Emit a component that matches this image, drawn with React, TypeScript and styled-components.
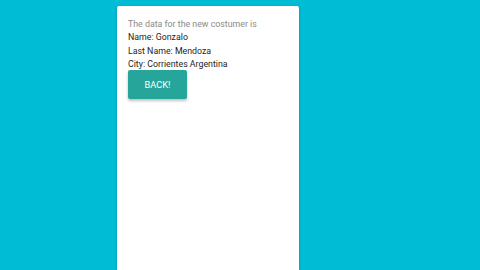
import React from "react";
import styled, { createGlobalStyle } from "styled-components";

const Global = createGlobalStyle`
  html, body { margin: 0; padding: 0; background: #00bcd4; height: 100%; overflow: hidden; }
  #root { height: 100%; }
`;

const Page = styled.div`
  display: flex;
  justify-content: flex-start;
  height: 270px;
  padding: 6px 0 0 117px;
  box-sizing: border-box;
`;

const Card = styled.div`
  width: 182px;
  background: #ffffff;
  border-radius: 2px 2px 0 0;
  box-shadow: 0 1px 3px rgba(0,0,0,0.25);
  padding: 12px 11px;
  box-sizing: border-box;
  font-family: Roboto, "Liberation Sans", sans-serif;
  font-size: 8.8px;
  line-height: 13.3px;
  color: #1e1e1e;
`;

const Lead = styled.div`
  color: #8a8a8a;
`;

const Line = styled.div``;

const Button = styled.button`
  display: block;
  margin-top: -1px;
  width: 59px;
  height: 29px;
  border: none;
  border-radius: 2px;
  background: #26a69a;
  color: #ffffff;
  font-family: Roboto, "Liberation Sans", sans-serif;
  font-size: 9.2px;
  box-shadow: 0 2px 3px rgba(0,0,0,0.25);
  padding: 0;
`;

export default function App() {
  return (
    <>
      <Global />
      <Page>
        <Card>
          <Lead>The data for the new costumer is</Lead>
          <Line>Name: Gonzalo</Line>
          <Line>Last Name: Mendoza</Line>
          <Line>City: Corrientes Argentina</Line>
          <Button>BACK!</Button>
        </Card>
      </Page>
    </>
  );
}
